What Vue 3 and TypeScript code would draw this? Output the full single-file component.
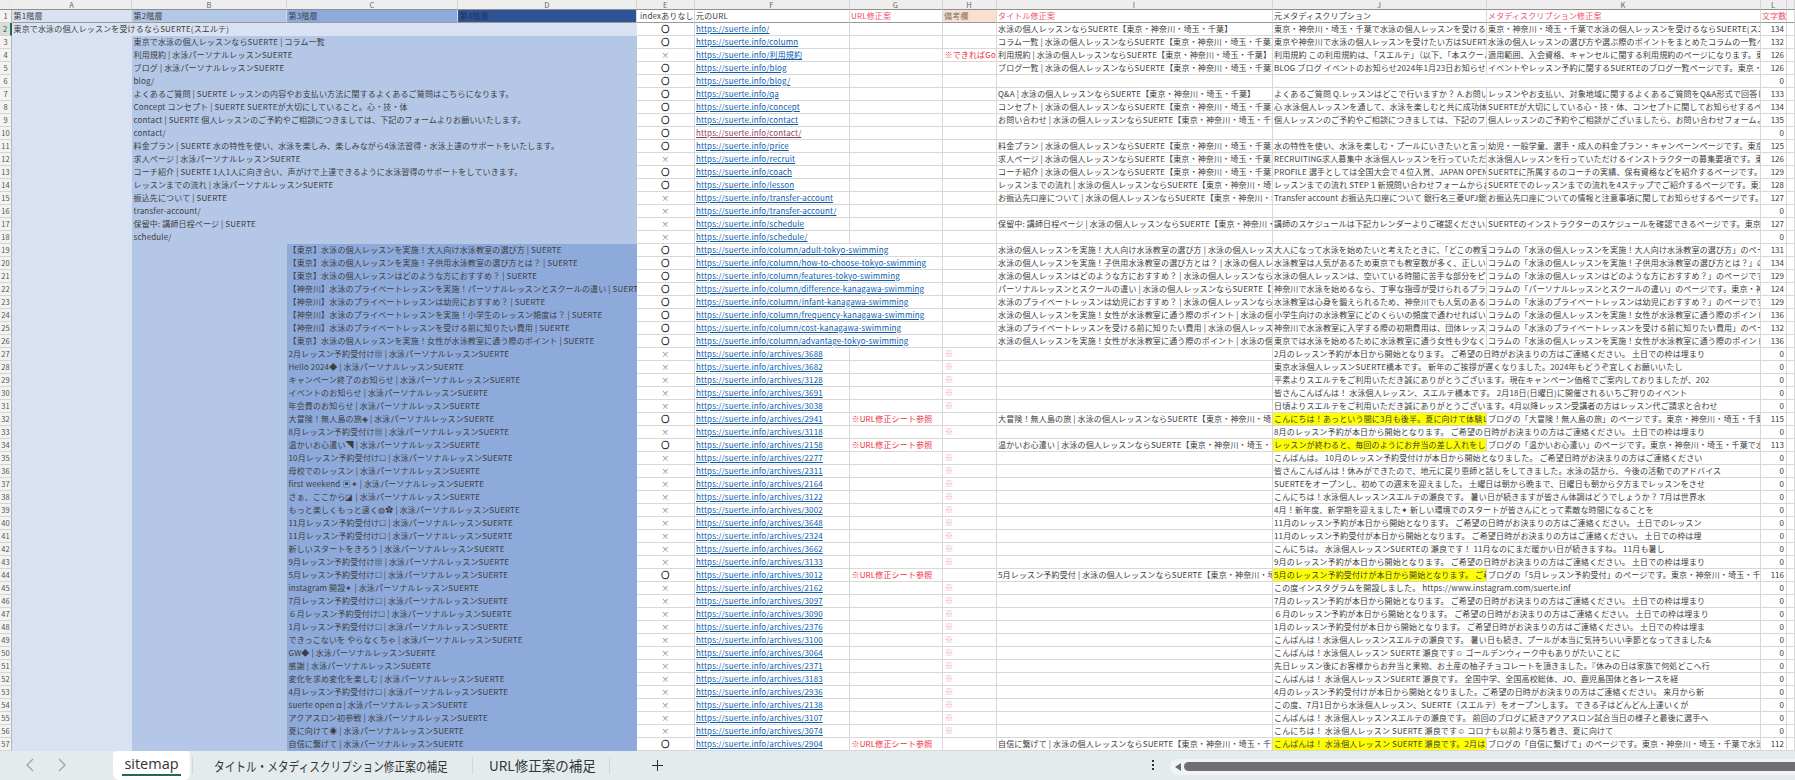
<script setup lang="ts">
interface Row {
  n: number; lv: number; t: string; ok: boolean; u: string; g?: boolean; h?: string;
  i?: string; j?: string; k?: string; c: number; y?: boolean; v?: boolean;
}
const S = ' | 水泳パーソナルレッスンSUERTE'
const I = '水泳の個人レッスンならSUERTE【東京・神奈川・埼玉・千葉】'
const B = 'https://suerte.info/'
const ok = true
const no = false

const rows: Row[] = [
  { n: 2, lv: 1, t: '東京で水泳の個人レッスンを受けるならSUERTE(スエルテ)', ok, u: '', i: I, j: '東京・神奈川・埼玉・千葉で水泳の個人レッスンを受けるならSUERTE(スエルテ)', k: '東京・神奈川・埼玉・千葉で水泳の個人レッスンを受けるならSUERTE(スエルテ)です。', c: 134 },
  { n: 3, lv: 2, t: '東京で水泳の個人レッスンならSUERTE | コラム一覧', ok, u: 'column', i: 'コラム一覧 | ' + I, j: '東京や神奈川で水泳の個人レッスンを受けたい方はSUERTEへ', k: '水泳の個人レッスンの選び方や選ぶ際のポイントをまとめたコラムの一覧ページです。', c: 132 },
  { n: 4, lv: 2, t: '利用規約' + S, ok: no, u: '利用規約', h: '※できればGoogle', i: '利用規約 | ' + I, j: '利用規約 この利用規約は、「スエルテ」（以下、「本スクール」といいます。）', k: '適用範囲、入会資格、キャンセルに関する利用規約のページになります。東京・神奈川', c: 126 },
  { n: 5, lv: 2, t: 'ブログ' + S, ok, u: 'blog', i: 'ブログ一覧 | ' + I, j: 'BLOG ブログ イベントのお知らせ2024年1月23日お知らせ皆様へ', k: 'イベントやレッスン予約に関するSUERTEのブログ一覧ページです。東京・神奈川', c: 126 },
  { n: 6, lv: 2, t: 'blog/', ok, u: 'blog/', c: 0 },
  { n: 7, lv: 2, t: 'よくあるご質問 | SUERTE レッスンの内容やお支払い方法に関するよくあるご質問はこちらになります。', ok, u: 'qa', i: 'Q&A | ' + I, j: 'よくあるご質問 Q.レッスンはどこで行いますか？ A.お問い合わせ', k: 'レッスンやお支払い、対象地域に関するよくあるご質問をQ&A形式で回答しています。', c: 133 },
  { n: 8, lv: 2, t: 'Concept コンセプト | SUERTE SUERTEが大切にしていること。心・技・体', ok, u: 'concept', i: 'コンセプト | ' + I, j: '心 水泳個人レッスンを通して、水泳を楽しむと共に成功体験を得る', k: 'SUERTEが大切にしている心・技・体、コンセプトに関してお知らせするページです。', c: 134 },
  { n: 9, lv: 2, t: 'contact | SUERTE 個人レッスンのご予約やご相談につきましては、下記のフォームよりお願いいたします。', ok, u: 'contact', i: 'お問い合わせ | ' + I, j: '個人レッスンのご予約やご相談につきましては、下記のフォームより', k: '個人レッスンのご予約やご相談がございましたら、お問い合わせフォームよりどうぞ', c: 135 },
  { n: 10, lv: 2, t: 'contact/', ok, u: 'contact/', v: true, c: 0 },
  { n: 11, lv: 2, t: '料金プラン | SUERTE 水の特性を使い、水泳を楽しみ、楽しみながら4泳法習得・水泳上達のサポートをいたします。', ok, u: 'price', i: '料金プラン | ' + I, j: '水の特性を使い、水泳を楽しむ・プールにいきたいと言っていただける', k: '幼児・一般学童、選手・成人の料金プラン・キャンペーンページです。東京・神奈川', c: 125 },
  { n: 12, lv: 2, t: '求人ページ' + S, ok: no, u: 'recruit', i: '求人ページ | ' + I, j: 'RECRUITING求人募集中 水泳個人レッスンを行っていただける', k: '水泳個人レッスンを行っていただけるインストラクターの募集要項です。東京・神奈川', c: 126 },
  { n: 13, lv: 2, t: 'コーチ紹介 | SUERTE 1人1人に向き合い、声がけで上達できるように水泳習得のサポートをしていきます。', ok, u: 'coach', i: 'コーチ紹介 | ' + I, j: 'PROFILE 選手としては全国大会で４位入賞、JAPAN OPEN 出場', k: 'SUERTEに所属するのコーチの実績、保有資格などを紹介するページです。東京', c: 129 },
  { n: 14, lv: 2, t: 'レッスンまでの流れ' + S, ok, u: 'lesson', i: 'レッスンまでの流れ | ' + I, j: 'レッスンまでの流れ STEP 1 新規問い合わせフォームからお申込み', k: 'SUERTEでのレッスンまでの流れを4ステップでご紹介するページです。東京・神奈川', c: 128 },
  { n: 15, lv: 2, t: '振込先について | SUERTE', ok: no, u: 'transfer-account', i: 'お振込先口座について | ' + I, j: 'Transfer account お振込先口座について 銀行名三菱UFJ銀行 支店', k: 'お振込先口座についての情報と注意事項に関してお知らせするページです。東京', c: 127 },
  { n: 16, lv: 2, t: 'transfer-account/', ok: no, u: 'transfer-account/', c: 0 },
  { n: 17, lv: 2, t: '保留中: 講師日程ページ | SUERTE', ok: no, u: 'schedule', i: '保留中: 講師日程ページ | ' + I, j: '講師のスケジュールは下記カレンダーよりご確認ください。', k: 'SUERTEのインストラクターのスケジュールを確認できるページです。東京・神奈川', c: 127 },
  { n: 18, lv: 2, t: 'schedule/', ok: no, u: 'schedule/', c: 0 },
  { n: 19, lv: 3, t: '【東京】水泳の個人レッスンを実施！大人向け水泳教室の選び方 | SUERTE', ok, u: 'column/adult-tokyo-swimming', i: '水泳の個人レッスンを実施！大人向け水泳教室の選び方 | ' + I, j: '大人になって水泳を始めたいと考えたときに、「どこの教室に通えば', k: 'コラムの「水泳の個人レッスンを実施！大人向け水泳教室の選び方」のページです。', c: 131 },
  { n: 20, lv: 3, t: '【東京】水泳の個人レッスンを実施！子供用水泳教室の選び方とは？ | SUERTE', ok, u: 'column/how-to-choose-tokyo-swimming', i: '水泳の個人レッスンを実施！子供用水泳教室の選び方とは？ | ' + I, j: '水泳教室は人気があるため東京でも教室数が多く、正しい選び方を', k: 'コラムの「水泳の個人レッスンを実施！子供用水泳教室の選び方とは？」のページです', c: 134 },
  { n: 21, lv: 3, t: '【東京】水泳の個人レッスンはどのような方におすすめ？ | SUERTE', ok, u: 'column/features-tokyo-swimming', i: '水泳の個人レッスンはどのような方におすすめ？ | ' + I, j: '水泳の個人レッスンは、空いている時間に苦手な部分をピンポイントで', k: 'コラムの「水泳の個人レッスンはどのような方におすすめ？」のページです。東京', c: 129 },
  { n: 22, lv: 3, t: '【神奈川】水泳のプライベートレッスンを実施！パーソナルレッスンとスクールの違い | SUERTE', ok, u: 'column/difference-kanagawa-swimming', i: 'パーソナルレッスンとスクールの違い | ' + I, j: '神奈川で水泳を始めるなら、丁寧な指導が受けられるプライベート', k: 'コラムの「パーソナルレッスンとスクールの違い」のページです。東京・神奈川', c: 124 },
  { n: 23, lv: 3, t: '【神奈川】水泳のプライベートレッスンは幼児におすすめ？ | SUERTE', ok, u: 'column/infant-kanagawa-swimming', i: '水泳のプライベートレッスンは幼児におすすめ？ | ' + I, j: '水泳教室は心身を鍛えられるため、神奈川でも人気のある習い事です', k: 'コラムの「水泳のプライベートレッスンは幼児におすすめ？」のページです。東京', c: 129 },
  { n: 24, lv: 3, t: '【神奈川】水泳のプライベートレッスンを実施！小学生のレッスン頻度は？ | SUERTE', ok, u: 'column/frequency-kanagawa-swimming', i: '水泳の個人レッスンを実施！女性が水泳教室に通う際のポイント | ' + I, j: '小学生向けの水泳教室にどのくらいの頻度で通わせればいいのか', k: 'コラムの「水泳の個人レッスンを実施！女性が水泳教室に通う際のポイント」のページ', c: 136 },
  { n: 25, lv: 3, t: '【神奈川】水泳のプライベートレッスンを受ける前に知りたい費用 | SUERTE', ok, u: 'column/cost-kanagawa-swimming', i: '水泳のプライベートレッスンを受ける前に知りたい費用 | ' + I, j: '神奈川で水泳教室に入学する際の初期費用は、団体レッスンと', k: 'コラムの「水泳のプライベートレッスンを受ける前に知りたい費用」のページです。', c: 132 },
  { n: 26, lv: 3, t: '【東京】水泳の個人レッスンを実施！女性が水泳教室に通う際のポイント | SUERTE', ok, u: 'column/advantage-tokyo-swimming', i: '水泳の個人レッスンを実施！女性が水泳教室に通う際のポイント | ' + I, j: '東京では水泳を始めるために水泳教室に通う女性も少なくありません', k: 'コラムの「水泳の個人レッスンを実施！女性が水泳教室に通う際のポイント」のページ', c: 136 },
  ...([
    [27, '2月レッスン予約受付け▦' + S, 3688, '2月のレッスン予約が本日から開始となります。 ご希望の日時がお決まりの方はご連絡ください。 土日での枠は埋まり'],
    [28, 'Hello 2024◆' + S, 3682, '東京水泳個人レッスンSUERTE橋本です。 新年のご挨拶が遅くなりました。2024年もどうぞ宜しくお願いいたし'],
    [29, 'キャンペーン終了のお知らせ' + S, 3128, '平素よりスエルテをご利用いただき誠にありがとうございます。現在キャンペーン価格でご案内しておりましたが、202'],
    [30, 'イベントのお知らせ' + S, 3691, '皆さんこんばんは！ 水泳個人レッスン、スエルテ橋本です。 2月18日(日曜日)に開催されるいちご狩りのイベント'],
    [31, '年会費のお知らせ' + S, 3038, '日頃よりスエルテをご利用いただき誠にありがとうございます。4月以降レッスン受講者の方はレッスン代ご請求と合わせ'],
    [32, '大冒険！無人島の旅◈' + S, 2941, 'こんにちは！あっという間に3月も後半。夏に向けて体験レッスン', 'ブログの「大冒険！無人島の旅」のページです。東京・神奈川・埼玉・千葉で水泳', 115, '大冒険！無人島の旅 | ' + I],
    [33, '8月レッスン予約受付け▦' + S, 3118, '8月のレッスン予約が本日から開始となります。 ご希望の日時がお決まりの方はご連絡ください。 土日での枠は埋まり'],
    [34, '温かいお心遣い◥' + S, 2158, 'レッスンが終わると、毎回のようにお弁当の差し入れをしていただ', 'ブログの「温かいお心遣い」のページです。東京・神奈川・埼玉・千葉で水泳', 113, '温かいお心遣い | ' + I],
    [35, '10月レッスン予約受付け☐' + S, 2277, 'こんばんは。 10月のレッスン予約受付けが本日から開始となりました。 ご希望日時がお決まりの方はご連絡ください'],
    [36, '母校でのレッスン' + S, 2311, '皆さんこんばんは！休みができたので、地元に戻り恩師と話しをしてきました。水泳の話から、今後の活動でのアドバイス'],
    [37, 'first weekend ▣✦' + S, 2164, 'SUERTEをオープンし、初めての週末を迎えました。 土曜日は朝から晩まで、日曜日も朝から夕方までレッスンをさせ'],
    [38, 'さぁ、ここから◪' + S, 3122, 'こんにちは！水泳個人レッスンスエルテの瀬良です。 暑い日が続きますが皆さん体調はどうでしょうか？ 7月は世界水'],
    [39, 'もっと楽しくもっと速く◍✿' + S, 3002, '4月！新年度、新学期を迎えました✦ 新しい環境でのスタートが皆さんにとって素敵な時間になることを'],
    [40, '11月レッスン予約受付け☐' + S, 3648, '11月のレッスン予約が本日から開始となります。 ご希望の日時がお決まりの方はご連絡ください。 土日でのレッスン'],
    [41, '11月レッスン予約受付け☐' + S, 2324, '11月のレッスン予約受付が本日から開始となります。 ご希望日時がお決まりの方はご連絡ください。 土日での枠は埋'],
    [42, '新しいスタートをきろう' + S, 3662, 'こんにちは。 水泳個人レッスンSUERTEの 瀬良です！ 11月なのにまだ暖かい日が続きますね。 11月も暑し'],
    [43, '9月レッスン予約受付け▦' + S, 3133, '9月のレッスン予約が本日から開始となります。 ご希望の日時がお決まりの方はご連絡ください。 土日での枠は埋まり'],
    [44, '5月レッスン予約受付け☐' + S, 3012, '5月のレッスン予約受付けが本日から開始となります。 ご希望の日時', 'ブログの「5月レッスン予約受付」のページです。東京・神奈川・埼玉・千葉で水泳', 116, '5月レッスン予約受付 | ' + I],
    [45, 'instagram 開設✦' + S, 2162, 'この度インスタグラムを開設しました。 https://www.instagram.com/suerte.inf'],
    [46, '7月レッスン予約受付け☐' + S, 3097, '7月のレッスン予約が本日から開始となります。 ご希望の日時がお決まりの方はご連絡ください。 土日での枠は埋まり'],
    [47, '６月レッスン予約受付け☐' + S, 3090, '６月のレッスン予約が本日から開始となります。 ご希望の日時がお決まりの方はご連絡ください。 土日での枠は埋まり'],
    [48, '1月レッスン予約受付け☐' + S, 2376, '1月のレッスン予約受付が本日から開始となります。 ご希望日時がお決まりの方はご連絡ください。 土日での枠は埋ま'],
    [49, 'できっこないを やらなくちゃ' + S, 3100, 'こんばんは！水泳個人レッスンスエルテの瀬良です。 暑い日も続き、プールが本当に気持ちいい季節となってきました&'],
    [50, 'GW◆' + S, 3064, 'こんばんは！水泳個人レッスン SUERTE 瀬良です☺ ゴールデンウィーク中もありがたいことに'],
    [51, '感謝' + S, 2371, '先日レッスン後にお客様からお弁当と果物、お土産の柚子チョコレートを頂きました。『休みの日は家族で何処どこへ行'],
    [52, '変化を求め変化を楽しむ' + S, 3183, 'こんばんは！ 水泳個人レッスンSUERTE 瀬良です。 全国中学、全国高校総体、JO、鹿児島国体と各レースを経'],
    [53, '4月レッスン予約受付け☐' + S, 2936, '4月のレッスン予約受付けが本日から開始となりました。ご希望の日時がお決まりの方はご連絡ください。 来月から新'],
    [54, 'suerte open ◘' + S, 2138, 'この度、7月1日から水泳個人レッスン、SUERTE（スエルテ）をオープンします。 できる子はどんどん上達いくが'],
    [55, 'アクアスロン初参戦' + S, 3107, 'こんばんは！ 水泳個人レッスンスエルテの瀬良です。 前回のブログに続きアクアスロン試合当日の様子と最後に選手へ'],
    [56, '夏に向けて◉' + S, 3074, 'こんにちは！ 水泳個人レッスン SUERTE 瀬良です☺ コロナも以前より落ち着き、夏に向けて'],
    [57, '自信に繋げて' + S, 2904, 'こんばんは！ 水泳個人レッスン SUERTE 瀬良です。2月はレッスン', 'ブログの「自信に繋げて」のページです。東京・神奈川・埼玉・千葉で水泳', 112, '自信に繋げて | ' + I],
  ] as [number, string, number, string, string?, number?, string?][]).map(([n, t, id, j, k, c, i]): Row => ({
    n, lv: 3, t, ok: !!k, u: 'archives/' + id, j, k, c: c ?? 0, i, g: !!k, y: !!k, h: k ? undefined : '※',
  })),
]

const colLetters = ['A', 'B', 'C', 'D', 'E', 'F', 'G', 'H', 'I', 'J', 'K', 'L']
const longUrl = (r: Row): boolean => r.n >= 19 && r.n <= 26
</script>

<template>
  <div class="page">
    <div class="sheet">
      <div class="corner"></div>
      <div v-for="c in colLetters" :key="c" class="col-letter">{{ c }}</div>
      <div class="col-letter blank"></div>

      <div class="rh">1</div>
      <div class="c hd l1">第1階層</div>
      <div class="c hd l2">第2階層</div>
      <div class="c hd l3">第3階層</div>
      <div class="c hd l4">第4階層</div>
      <div class="c hd idx">indexありなし</div>
      <div class="c hd">元のURL</div>
      <div class="c hd red">URL修正案</div>
      <div class="c hd peach">備考欄</div>
      <div class="c hd red">タイトル修正案</div>
      <div class="c hd">元メタディスクリプション</div>
      <div class="c hd red">メタディスクリプション修正案</div>
      <div class="c hd red">文字数</div>
      <div class="c hd"></div>

      <template v-for="r in rows" :key="r.n">
        <div class="rh" :class="{ sel: r.n === 2 }">{{ r.n }}</div>
        <div v-if="r.lv === 1" class="c fill l1 span4 active">{{ r.t }}</div>
        <template v-else>
          <div class="c fill l1"></div>
          <div v-if="r.lv === 2" class="c fill l2 span3">{{ r.t }}</div>
          <template v-else>
            <div class="c fill l2"></div>
            <div class="c fill l3 span2">{{ r.t }}</div>
          </template>
        </template>
        <div class="c mark" :class="{ cross: !r.ok }">{{ r.ok ? '○' : '×' }}</div>
        <div class="c url" :class="{ visited: r.v, span2: longUrl(r) }">{{ B + r.u }}</div>
        <div v-if="!longUrl(r)" class="c redt">{{ r.g ? '※URL修正シート参照' : '' }}</div>
        <div class="c redt" :class="{ pale: r.h === '※' }">{{ r.h }}</div>
        <div class="c">{{ r.i }}</div>
        <div class="c" :class="{ span2: !r.k, yellow: r.y }">{{ r.j }}</div>
        <div v-if="r.k" class="c">{{ r.k }}</div>
        <div class="c num">{{ r.c }}</div>
        <div class="c"></div>
      </template>
    </div>

    <div class="tabbar">
      <span class="nav"><svg width="10" height="14" viewBox="0 0 10 14"><path d="M8 1 2 7l6 6" fill="none" stroke="#9aa3a6" stroke-width="1.2" /></svg></span>
      <span class="nav second"><svg width="10" height="14" viewBox="0 0 10 14"><path d="M2 1l6 6-6 6" fill="none" stroke="#9aa3a6" stroke-width="1.2" /></svg></span>
      <div class="tab active-tab"><span class="tab-label">sitemap</span></div>
      <i class="sep"></i>
      <div class="tab wide"><span class="squeeze">タイトル・メタディスクリプション修正案の補足</span></div>
      <i class="sep sep-mid"></i>
      <div class="tab url-tab">URL修正案の補足</div>
      <i class="sep last"></i>
      <span class="plus"><svg width="13" height="13" viewBox="0 0 13 13"><path d="M6.5 1v11M1 6.5h11" stroke="#2b2b2b" stroke-width="1" fill="none" /></svg></span>
      <span class="dots"><b></b><b></b><b></b></span>
      <div class="scroll">
        <svg class="arrow" width="6" height="8" viewBox="0 0 6 8"><path d="M6 0v8L0 4z" fill="#6a6a6a" /></svg>
        <div class="thumb"></div>
      </div>
    </div>
  </div>
</template>

<style scoped>
.page {
  width: 1795px;
  height: 780px;
  overflow: hidden;
  display: flex;
  flex-direction: column;
  background: #fff;
  font-family: "Noto Sans CJK JP", "Noto Sans", sans-serif;
}
.sheet {
  display: grid;
  grid-template-columns: 12px 120px 155px 171px 179px 57.5px 155px 93px 54px 276px 214px 274px 26px 8.5px;
  grid-template-rows: 9.5px 13px repeat(56, 13px);
  flex: none;
  font-size: 8px;
  letter-spacing: 0.15px;
  line-height: 12px;
  color: #3d3d3d;
}
.corner {
  background: #ececec;
  border-bottom: 1px solid #8f8f8f;
}
.col-letter {
  background: #eeeeee;
  border-bottom: 1px solid #8f8f8f;
  border-right: 1px solid #d4d4d4;
  color: #666;
  font-size: 7.5px;
  line-height: 9px;
  text-align: center;
  box-sizing: border-box;
}
.rh {
  background: #f3f3f3;
  border-right: 1px solid #b5b5b5;
  border-bottom: 1px solid #d4d4d4;
  box-sizing: border-box;
  color: #555;
  font-size: 7.5px;
  letter-spacing: 0;
  line-height: 12px;
  text-align: center;
}
.rh.sel {
  background: #dcdcdc;
  color: #1d6b43;
  border-right: 2px solid #1d6b43;
}
.c {
  min-width: 0;
  padding: 0 0 0 1.5px;
  box-sizing: border-box;
  white-space: nowrap;
  overflow: hidden;
  border-right: 1px solid #d8d8d8;
  border-bottom: 1px solid #d8d8d8;
}
.hd {
  border-bottom: 1.5px solid #9a9a9a;
}
.fill { border: 0; }
.l1 { background: #d9e2f3; }
.l2 { background: #b4c7e7; }
.l3 { background: #8eaadb; }
.l4 { background: #2f5496; color: #1f3359; }
.span2 { grid-column: span 2; }
.span3 { grid-column: span 3; }
.span4 { grid-column: span 4; }
.idx { padding-left: 3px; }
.red { color: #f0506a; }
.peach { background: #fbdfd0; color: #776; }
.mark {
  text-align: center;
  color: #111;
  padding: 0;
  font-size: 8px;
  font-weight: 700;
  -webkit-text-stroke: 0.35px #111;
}
.mark.cross { color: #777; font-size: 8px; font-weight: 400; -webkit-text-stroke: 0; }
.url {
  color: #0b5cad;
  text-decoration: underline;
  letter-spacing: 0.12px;
}
.url.visited { color: #8f3f63; }
.redt { color: #ee2a3c; padding-left: 2px; }
.pale { color: #f6a0a8; padding-left: 2px; font-size: 9px; }
.yellow { background: #ffff00; }
.num { text-align: right; padding-right: 1.5px; letter-spacing: 0; }

.tabbar {
  flex: 1;
  display: flex;
  align-items: center;
  background: #e4ebed;
  color: #2d2d2d;
}
.nav {
  display: flex;
  margin-left: 25px;
}
.nav.second { margin-left: 22px; }
.tab {
  white-space: nowrap;
  color: #333;
  font-size: 13px;
}
.active-tab {
  width: 77px;
  height: 100%;
  margin-left: 46px;
  background: #fff;
  border-radius: 4px 4px 6px 6px;
  display: flex;
  justify-content: center;
  align-items: center;
  font-family: "Open Sans", sans-serif;
  font-size: 14.5px;
}
.tab-label {
  border-bottom: 2px solid #1e6c49;
  padding: 0 2px 0;
  line-height: 20px;
}
.wide { margin-left: 21px; width: 237px; }
.squeeze {
  display: inline-block;
  transform: scaleX(0.82);
  transform-origin: left center;
}
.url-tab { margin-left: 16px; width: 108px; font-size: 13.5px; }
.sep {
  width: 1px;
  height: 17px;
  background: #cfd6d8;
  margin-left: 2px;
}
.sep-mid { margin-left: 21px; }
.sep.last { margin-left: 12px; }
.plus {
  display: flex;
  margin-left: 41px;
}
.dots {
  display: flex;
  flex-direction: column;
  gap: 2px;
  margin-left: 488px;
}
.dots b {
  width: 2px;
  height: 2px;
  background: #333;
  display: block;
}
.scroll {
  flex: 1;
  margin-left: 16px;
  height: 16px;
  margin-top: 3px;
  background: #f1f4f5;
  border-radius: 8px 0 0 8px;
  display: flex;
  align-items: center;
  padding-left: 5px;
}
.arrow { flex: none; }
.thumb {
  flex: 1;
  height: 9px;
  margin-left: 3px;
  background: #6e6e6e;
  border-radius: 5px 0 0 5px;
}
</style>
<style>
html, body { margin: 0; background: #fff; }
</style>
